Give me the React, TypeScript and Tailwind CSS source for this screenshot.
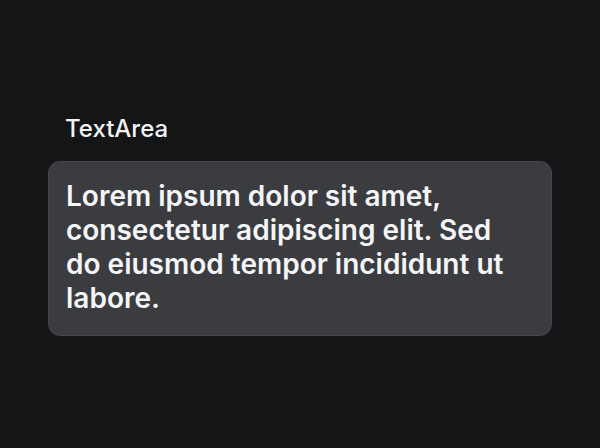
export default function App() {
  return (
    <div className="min-h-screen bg-[#141517] flex flex-col justify-center px-12 font-['Inter',sans-serif]">
      <label className="block px-[17px] mb-4 text-[24px] leading-[32px] font-medium text-[#f1f2f4]">TextArea</label>
      <div className="rounded-xl border border-[#46474b] bg-[#3b3c40] pl-[17px] pr-[36px] pt-[17px] pb-[20px]">
        <p className="text-[28px] leading-[34px] font-semibold text-[#f4f5f7]">
          Lorem ipsum dolor sit amet, consectetur adipiscing elit. Sed do eiusmod tempor incididunt ut labore.
        </p>
      </div>
    </div>
  );
}
